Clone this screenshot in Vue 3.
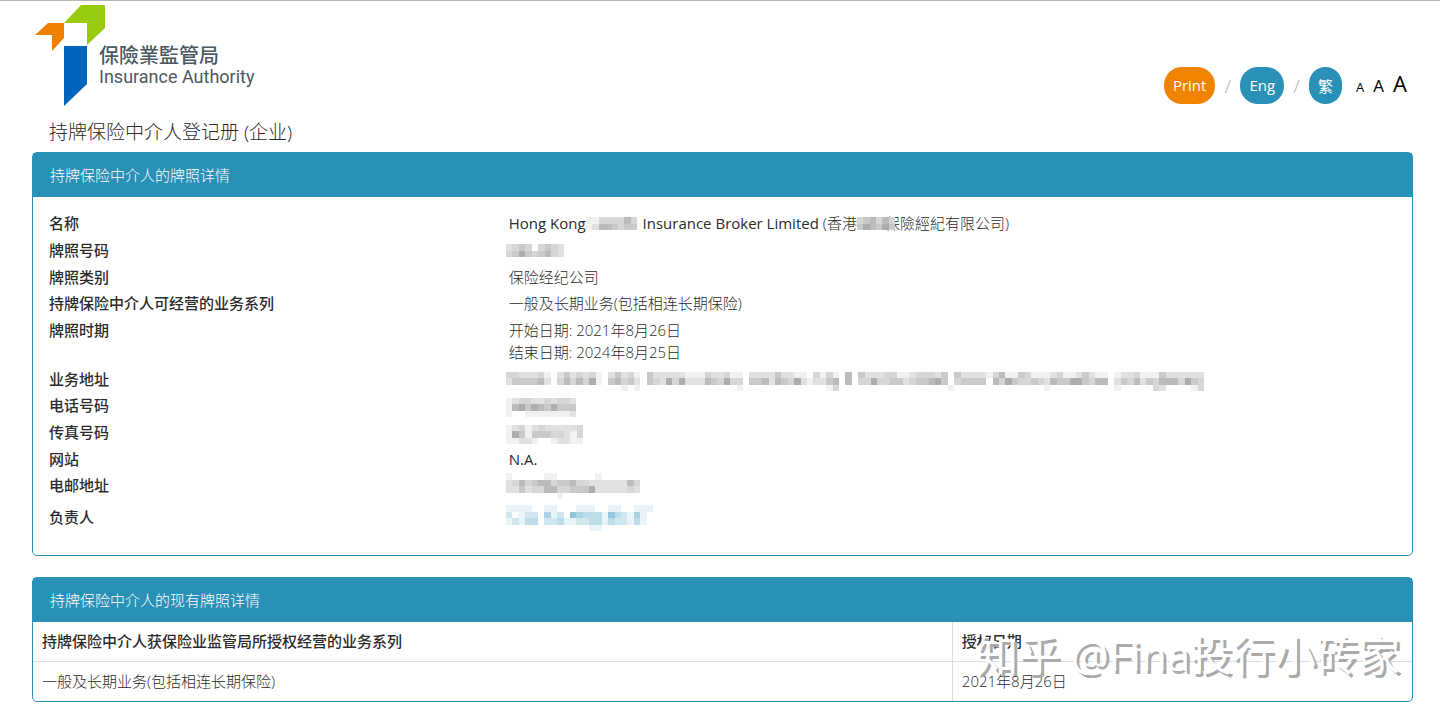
<script setup>
// mosaico: 1 = claro, 6 = oscuro, punto = vacío
const address = [
    '3322231.2423231.24231.422222111322311.222242211.3131.5.42223311233324.422221351143111231124211.12231114222222',
    '2444452.3535361.45342.432636222543633.44525436212245.5.33633442344564.34444.536433432544664355.24352435553643',
    '..................1.1...............1.............13.................1..............1..........1.....32....13'
];

const rows = [
    { label: '名称', parts: [
        { text: 'Hong Kong', latin: true },
        { mask: ['11333353', '12554344'], tone: 'gray' },
        { text: 'Insurance Broker Limited', latin: true, spaced: true },
        { text: '(香港' },
        { mask: ['345353', '465464'], tone: 'gray', cover: true },
        { text: '保險經紀有限公司)' }
    ] },
    { label: '牌照号码', parts: [{ mask: ['2343.3432', '346434532'], tone: 'gray' }] },
    { label: '牌照类别', parts: [{ text: '保险经纪公司' }] },
    { label: '持牌保险中介人可经营的业务系列', parts: [{ text: '一般及长期业务(包括相连长期保险)' }] },
    { label: '牌照时期', parts: [{ text: '开始日期: 2021年8月26日\n结束日期: 2024年8月25日' }] },
    { label: '业务地址', parts: [{ mask: address, tone: 'gray' }] },
    { label: '电话号码', parts: [{ mask: ['12332232332', '15646546444', '1..11111112'], tone: 'gray' }] },
    { label: '传真号码', parts: [{ mask: ['123123222223', '164144433213', '11221..12211'], tone: 'gray' }] },
    { label: '网站', parts: [{ text: 'N.A.', latin: true }] },
    { label: '电邮地址', parts: [{ mask: ['1.....11......1......', '235345534453322222253', '224233553344462222232', '........1............'], tone: 'gray' }] },
    { label: '负责人', parts: [{ mask: ['1111..11...111..11..111', '2.122.412.543331532141.', '12133.2231122331322131.', '.............11........'], tone: 'blue' }] }
];

const cells = (mask) => mask.flatMap((line, y) =>
    [...line].map((shade, x) => ({ x, y, shade })).filter((c) => c.shade > 0)
);

const licences = [
    { line: '一般及长期业务(包括相连长期保险)', date: '2021年8月26日' }
];
</script>

<template>
    <div class="page">
        <header class="top">
            <a class="logo" href="#">
                <svg class="logo-mark" viewBox="0 0 70 102" aria-hidden="true">
                    <path d="M0 30 13 18H29V33L17 46V30Z" fill="#ef7f00" />
                    <path d="M29 18 46 0H70V23L52 40V18Z" fill="#9c1" />
                    <path d="M29 41H52V79L29 101Z" fill="#0065bd" />
                </svg>
                <span class="logo-text">
                    <span class="logo-zh">保險業監管局</span>
                    <span class="logo-en">Insurance Authority</span>
                </span>
            </a>
            <nav class="tools">
                <button class="pill print" type="button">Print</button>
                <span class="slash">/</span>
                <a class="pill" href="#">Eng</a>
                <span class="slash">/</span>
                <a class="pill zh" href="#">繁</a>
                <span class="sizes">
                    <button class="size small" type="button">A</button>
                    <button class="size medium" type="button">A</button>
                    <button class="size large" type="button">A</button>
                </span>
            </nav>
        </header>

        <h1>持牌保险中介人登记册 (企业)</h1>

        <section class="panel">
            <h2>持牌保险中介人的牌照详情</h2>
            <dl class="details">
                <div v-for="row in rows" :key="row.label" class="row">
                    <dt>{{ row.label }}</dt>
                    <dd>
                        <template v-for="(part, i) in row.parts" :key="i">
                            <span
                                v-if="part.text"
                                class="text"
                                :class="{ latin: part.latin, spaced: part.spaced }"
                            >{{ part.text }}</span>
                            <svg
                                v-else
                                class="mask"
                                :class="[part.tone, 'rows-' + part.mask.length, { lead: i === 0, cover: part.cover }]"
                                :viewBox="`0 0 ${part.mask[0].length} ${part.mask.length}`"
                                :style="{ width: Math.round(part.mask[0].length * 6.4) + 'px' }"
                                preserveAspectRatio="none"
                                shape-rendering="crispEdges"
                                aria-hidden="true"
                            >
                                <rect
                                    v-for="c in cells(part.mask)"
                                    :key="c.x + '-' + c.y"
                                    :class="'s' + c.shade"
                                    :x="c.x"
                                    :y="c.y"
                                    width="1"
                                    height="1"
                                />
                            </svg>
                        </template>
                    </dd>
                </div>
            </dl>
        </section>

        <section class="panel">
            <h2>持牌保险中介人的现有牌照详情</h2>
            <table>
                <thead>
                    <tr>
                        <th scope="col">持牌保险中介人获保险业监管局所授权经营的业务系列</th>
                        <th scope="col" class="date">授权日期</th>
                    </tr>
                </thead>
                <tbody>
                    <tr v-for="item in licences" :key="item.line">
                        <td>{{ item.line }}</td>
                        <td>{{ item.date }}</td>
                    </tr>
                </tbody>
            </table>
            <!-- marca de agua -->
            <div class="watermark">知乎 @Fina投行小砖家</div>
        </section>
    </div>
</template>

<style>
body {
    background: #fff;
}
</style>

<style scoped>
.page {
    border-top: 1px solid #b5b5b5;
    padding: 0 27px 14px 32px;
    font-family: "Open Sans", "Noto Sans CJK SC", sans-serif;
    font-size: 15px;
    line-height: 22px;
    color: #2b2b2b;
}

a {
    color: inherit;
    text-decoration: none;
}

button {
    border: none;
    background: none;
    font-family: inherit;
    cursor: pointer;
}

/* CABECERA */
.top {
    display: flex;
    justify-content: space-between;
    align-items: flex-start;
    padding: 4px 6px 0 3px;
}

.logo {
    display: flex;
    color: #4d5961;
}

.logo-mark {
    width: 70px;
    height: 102px;
}

.logo-text {
    display: flex;
    flex-direction: column;
    margin-left: -6px;
    padding-top: 38px;
}

.logo-zh {
    font-family: "Noto Sans CJK TC", sans-serif;
    font-size: 20px;
    font-weight: 500;
    line-height: 24px;
}

.logo-en {
    font-family: Roboto, sans-serif;
    font-size: 18px;
    line-height: 20px;
}

.tools {
    display: flex;
    align-items: center;
    padding-top: 62px;
}

.pill {
    height: 37px;
    padding: 0 9px;
    border-radius: 18px;
    background: #2990b7;
    color: #fff;
    font-size: 15px;
    line-height: 37px;
}

.print {
    background: #f08300;
}

.zh {
    font-family: "Noto Sans CJK TC", sans-serif;
}

.slash {
    width: 25px;
    text-align: center;
    font-size: 18px;
    font-weight: 300;
    color: #aaa;
}

.sizes {
    display: flex;
    align-items: baseline;
    gap: 9px;
    margin-left: 14px;
    padding-bottom: 6px;
}

.size {
    padding: 0;
    color: #000;
}

.small {
    font-size: 13px;
}

.medium {
    font-size: 17px;
}

.large {
    font-size: 22px;
}

h1 {
    margin: 12px 17px 7px;
    font-size: 19px;
    font-weight: 300;
    line-height: 26px;
}

/* PANELES */
.panel {
    position: relative;
    margin-bottom: 21px;
    border: 1px solid #2990b7;
    border-radius: 5px;
}

.panel:last-child {
    margin-bottom: 0;
}

h2 {
    margin: 0;
    padding: 11px 17px;
    background: #2990b7;
    color: #fff;
    font-size: 15px;
    font-weight: 300;
}

.details {
    margin: 0;
    padding: 15px 0 27px;
}

.row {
    display: grid;
    grid-template-columns: 1fr 2fr;
    margin-bottom: 5px;
}

.row:nth-child(3n) {
    margin-bottom: 4px;
}

.row:last-child {
    margin: 10px 0 0;
}

dt,
dd {
    margin: 0;
    padding-left: 16px;
}

dt {
    font-weight: 500;
}

dd {
    display: flex;
    font-weight: 300;
}

.text {
    white-space: pre-line;
}

.latin {
    font-weight: 400;
}

.spaced {
    margin: 0 4px 0 6px;
}

/* MOSAICO */
.mask {
    height: 13px;
    margin-top: 5px;
    background: #fff;
}

.rows-3 {
    height: 19px;
    margin: 4px 0 -1px;
}

.rows-4 {
    height: 26px;
    margin: -1px 0 -3px;
}

.lead {
    margin-left: -3px;
}

.cover {
    position: relative;
    margin-right: -10px;
}

.gray {
    --tone: #777;
}

.blue {
    --tone: #2990b7;
}

rect {
    fill: var(--tone);
}

.s1 { opacity: 0.1; }
.s2 { opacity: 0.22; }
.s3 { opacity: 0.3; }
.s4 { opacity: 0.4; }
.s5 { opacity: 0.5; }
.s6 { opacity: 0.6; }

/* TABLA */
table {
    width: 100%;
    border-collapse: collapse;
}

th,
td {
    padding: 9px;
    line-height: 21px;
    text-align: left;
}

th {
    border-bottom: 1px solid #ddd;
    font-weight: 500;
}

td {
    font-weight: 300;
}

th + th,
td + td {
    border-left: 1px solid #ddd;
}

.date {
    box-sizing: border-box;
    width: calc(100% / 3);
}

.watermark {
    position: absolute;
    right: 12px;
    bottom: 16px;
    color: #fff;
    font-size: 42px;
    line-height: 60px;
    text-shadow: 3px 3px 0 #aaa;
    white-space: nowrap;
    pointer-events: none;
}
</style>
